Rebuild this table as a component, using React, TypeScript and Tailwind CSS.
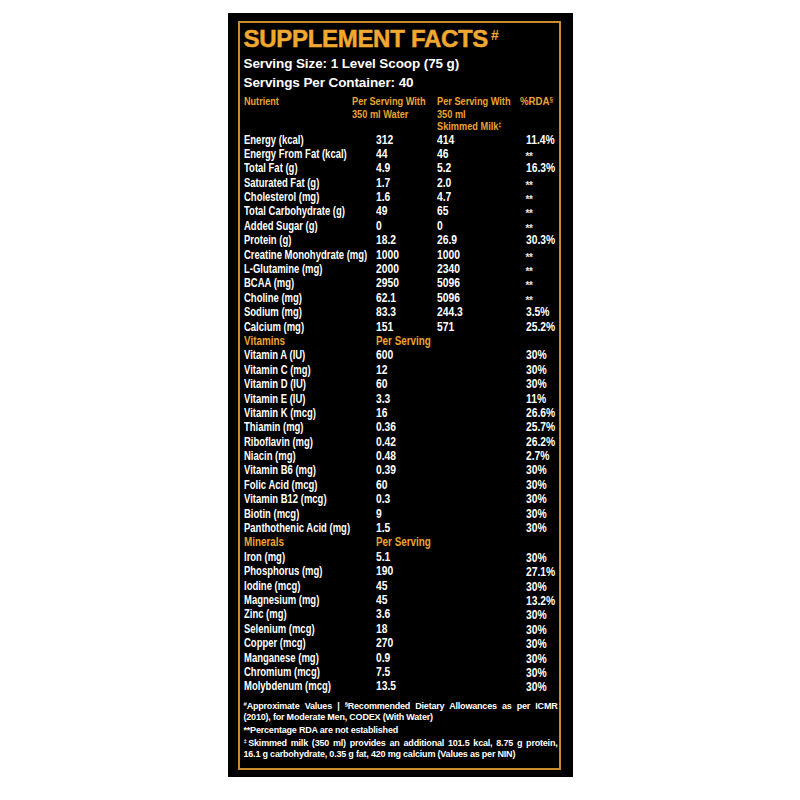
import React from 'react';

type Row = [string, string, string, string];

const main: Row[] = [
  ['Energy (kcal)', '312', '414', '11.4%'],
  ['Energy From Fat (kcal)', '44', '46', '**'],
  ['Total Fat (g)', '4.9', '5.2', '16.3%'],
  ['Saturated Fat (g)', '1.7', '2.0', '**'],
  ['Cholesterol (mg)', '1.6', '4.7', '**'],
  ['Total Carbohydrate (g)', '49', '65', '**'],
  ['Added Sugar (g)', '0', '0', '**'],
  ['Protein (g)', '18.2', '26.9', '30.3%'],
  ['Creatine Monohydrate (mg)', '1000', '1000', '**'],
  ['L-Glutamine (mg)', '2000', '2340', '**'],
  ['BCAA (mg)', '2950', '5096', '**'],
  ['Choline (mg)', '62.1', '5096', '**'],
  ['Sodium (mg)', '83.3', '244.3', '3.5%'],
  ['Calcium (mg)', '151', '571', '25.2%'],
];

const vitamins: Row[] = [
  ['Vitamin A (IU)', '600', '', '30%'],
  ['Vitamin C (mg)', '12', '', '30%'],
  ['Vitamin D (IU)', '60', '', '30%'],
  ['Vitamin E (IU)', '3.3', '', '11%'],
  ['Vitamin K (mcg)', '16', '', '26.6%'],
  ['Thiamin (mg)', '0.36', '', '25.7%'],
  ['Riboflavin (mg)', '0.42', '', '26.2%'],
  ['Niacin (mg)', '0.48', '', '2.7%'],
  ['Vitamin B6 (mg)', '0.39', '', '30%'],
  ['Folic Acid (mcg)', '60', '', '30%'],
  ['Vitamin B12 (mcg)', '0.3', '', '30%'],
  ['Biotin (mcg)', '9', '', '30%'],
  ['Panthothenic Acid (mg)', '1.5', '', '30%'],
];

const minerals: Row[] = [
  ['Iron (mg)', '5.1', '', '30%'],
  ['Phosphorus (mg)', '190', '', '27.1%'],
  ['Iodine (mcg)', '45', '', '30%'],
  ['Magnesium (mg)', '45', '', '13.2%'],
  ['Zinc (mg)', '3.6', '', '30%'],
  ['Selenium (mcg)', '18', '', '30%'],
  ['Copper (mcg)', '270', '', '30%'],
  ['Manganese (mg)', '0.9', '', '30%'],
  ['Chromium (mcg)', '7.5', '', '30%'],
  ['Molybdenum (mcg)', '13.5', '', '30%'],
];

// label / value / value / %RDA
const rowGrid = 'grid grid-cols-[132px_61px_89px_1fr]';
const cond = 'block origin-left scale-x-[0.79] whitespace-nowrap';
const num = 'block origin-left scale-x-[0.86] whitespace-nowrap';

function DataRow({ row, low }: { row: Row; low?: boolean }) {
  const [name, a, b, rda] = row;
  return (
    <div className={`${rowGrid} h-[14.4px] leading-[14.4px] text-[12px] font-bold text-white`}>
      <span className={cond}>{name}</span>
      <span className={num}>{a}</span>
      <span className={num}>{b}</span>
      {rda === '**' ? (
        <span className="block pt-[3px] text-[10px] tracking-[-0.5px] text-gray-200">**</span>
      ) : (
        <span className={`${num} ${low ? 'pt-[1px]' : ''}`}>{rda}</span>
      )}
    </div>
  );
}

function SectionHead({ title }: { title: string }) {
  return (
    <div className={`${rowGrid} h-[14.4px] leading-[14.4px] text-[12.5px] font-bold text-[#eba332]`}>
      <span className={cond}>{title}</span>
      <span className={cond}>Per Serving</span>
    </div>
  );
}

export default function App() {
  return (
    <div className="min-h-[800px] bg-white flex justify-center pt-[13px] font-['Liberation_Sans',sans-serif]">
      <div className="w-[345px] h-[764px] bg-black pt-[8px] pl-[10px] pr-[12px] pb-[7px]">
        <div className="h-full border-2 border-[#c98d2e] pl-[4px] pr-[1px]">
          <h1 className="pt-[1px] leading-[30px] text-[24px] font-bold tracking-[-0.3px] text-[#f0a830] [-webkit-text-stroke:0.5px_#f0a830]">
            SUPPLEMENT FACTS<sup className="ml-[3px] text-[14px] [-webkit-text-stroke:0px]">#</sup>
          </h1>
          <p className="leading-[19px] text-[13.5px] font-bold tracking-[-0.1px] text-white">Serving Size: 1 Level Scoop (75 g)</p>
          <p className="leading-[19px] text-[13.5px] font-bold tracking-[-0.1px] text-white">Servings Per Container: 40</p>

          <div className="grid grid-cols-[108px_85px_83px_1fr] mt-[3px] h-[37.5px] leading-[12.5px] text-[11.5px] font-bold text-[#eba332]">
            <span className={cond}>Nutrient</span>
            <span className="block origin-left scale-x-[0.8] whitespace-nowrap">
              Per Serving With<br />350 ml Water
            </span>
            <span className="block origin-left scale-x-[0.8] whitespace-nowrap">
              Per Serving With<br />350 ml<br />Skimmed Milk<sup className="text-[7px]">‡</sup>
            </span>
            <span className="block origin-left scale-x-[0.88] whitespace-nowrap text-[11px]">
              %RDA<sup className="text-[7px]">§</sup>
            </span>
          </div>

          <div>
            {main.map((r) => (
              <DataRow key={r[0]} row={r} />
            ))}
            <SectionHead title="Vitamins" />
            {vitamins.map((r) => (
              <DataRow key={r[0]} row={r} />
            ))}
            <SectionHead title="Minerals" />
            {minerals.map((r) => (
              <DataRow key={r[0]} row={r} low />
            ))}
          </div>

          <div className="mt-[7px] text-[9px] font-bold tracking-[-0.2px] text-white">
            <p className="leading-[11.5px] text-justify [text-align-last:justify]">
              <sup className="text-[6px]">#</sup>Approximate Values | <sup className="text-[6px]">§</sup>Recommended Dietary Allowances as per ICMR
            </p>
            <p className="leading-[11.5px]">(2010), for Moderate Men, CODEX (With Water)</p>
            <p className="leading-[12px]">**Percentage RDA are not established</p>
            <p className="mt-[2px] leading-[11.5px] text-justify [text-align-last:justify]">
              <sup className="text-[6px]">‡</sup>Skimmed milk (350 ml) provides an additional 101.5 kcal, 8.75 g protein,
            </p>
            <p className="leading-[11.5px]">16.1 g carbohydrate, 0.35 g fat, 420 mg calcium (Values as per NIN)</p>
          </div>
        </div>
      </div>
    </div>
  );
}
